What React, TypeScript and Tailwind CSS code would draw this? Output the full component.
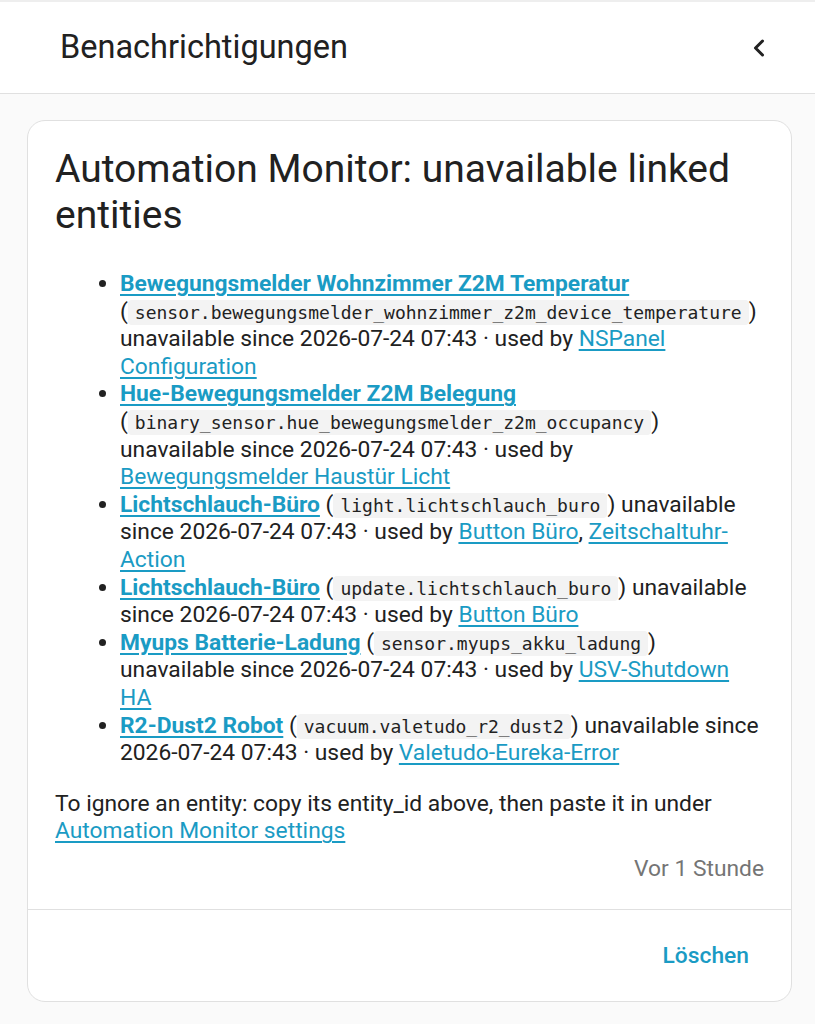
import React from 'react';
import { ChevronLeft } from 'lucide-react';

type Entity = {
  name: string;
  id: string;
  users: string[];
};

const ENTITIES: Entity[] = [
  {
    name: 'Bewegungsmelder Wohnzimmer Z2M Temperatur',
    id: 'sensor.bewegungsmelder_wohnzimmer_z2m_device_temperature',
    users: ['NSPanel Configuration'],
  },
  {
    name: 'Hue-Bewegungsmelder Z2M Belegung',
    id: 'binary_sensor.hue_bewegungsmelder_z2m_occupancy',
    users: ['Bewegungsmelder Haustür Licht'],
  },
  {
    name: 'Lichtschlauch-Büro',
    id: 'light.lichtschlauch_buro',
    users: ['Button Büro', 'Zeitschaltuhr-Action'],
  },
  {
    name: 'Lichtschlauch-Büro',
    id: 'update.lichtschlauch_buro',
    users: ['Button Büro'],
  },
  {
    name: 'Myups Batterie-Ladung',
    id: 'sensor.myups_akku_ladung',
    users: ['USV-Shutdown HA'],
  },
  {
    name: 'R2-Dust2 Robot',
    id: 'vacuum.valetudo_r2_dust2',
    users: ['Valetudo-Eureka-Error'],
  },
];

const SINCE = '2026-07-24 07:43';

const linkCls = 'text-[#1a9bc4] underline underline-offset-[3px] decoration-[1.5px]';

const EntityItem: React.FC<{ item: Entity }> = ({ item }) => (
  <li>
    <a href="#" className={`${linkCls} font-bold`}>
      {item.name}
    </a>{' '}
    (
    <code className="font-['DejaVu_Sans_Mono',monospace] text-[18px] leading-none bg-[#f3f3f3] rounded px-[7px] py-[2px] text-[#222]">
      {item.id}
    </code>
    ) unavailable since {SINCE} · used by{' '}
    {item.users.map((u, i) => (
      <React.Fragment key={u}>
        {i > 0 && ', '}
        <a href="#" className={linkCls}>
          {u}
        </a>
      </React.Fragment>
    ))}
  </li>
);

export default function App() {
  return (
    <div className="min-h-screen bg-[#fafafa] font-['Roboto','Liberation_Sans',sans-serif] text-[#212121]">
      {/* top bar */}
      <header className="h-[94px] bg-white border-t-2 border-t-[#eeeeee] border-b border-b-[#e0e0e0] flex items-center justify-between pl-[60px] pr-[42px]">
        <h1 className="text-[32.5px] font-normal">Benachrichtigungen</h1>
        <ChevronLeft size={28} strokeWidth={2.6} className="text-[#222]" />
      </header>

      <div className="pt-[26px] pl-[27px] pr-[23px] pb-[22px]">
        <div className="bg-white border border-[#e0e0e0] rounded-[18px]">
          <div className="px-[27px] pt-[25px] pb-[27px]">
            <h2 className="text-[39px] leading-[46px] font-normal">
              Automation Monitor: unavailable linked entities
            </h2>

            <ul className="list-disc pl-[65px] mt-[32px] text-[22.8px] leading-[27.6px] marker:text-[#212121]">
              {ENTITIES.map((e, i) => (
                <EntityItem key={i} item={e} />
              ))}
            </ul>

            <p className="mt-[23px] text-[22.8px] leading-[27.6px]">
              To ignore an entity: copy its entity_id above, then paste it in under{' '}
              <a href="#" className={linkCls}>
                Automation Monitor settings
              </a>
            </p>

            <div className="mt-[10px] text-right text-[22.8px] leading-[27.6px] text-[#757575]">
              Vor 1 Stunde
            </div>
          </div>

          <div className="border-t border-[#e0e0e0] h-[92px] flex items-center justify-end pr-[42px]">
            <button className="text-[22.8px] font-medium text-[#1a9bc4]">Löschen</button>
          </div>
        </div>
      </div>
    </div>
  );
}
